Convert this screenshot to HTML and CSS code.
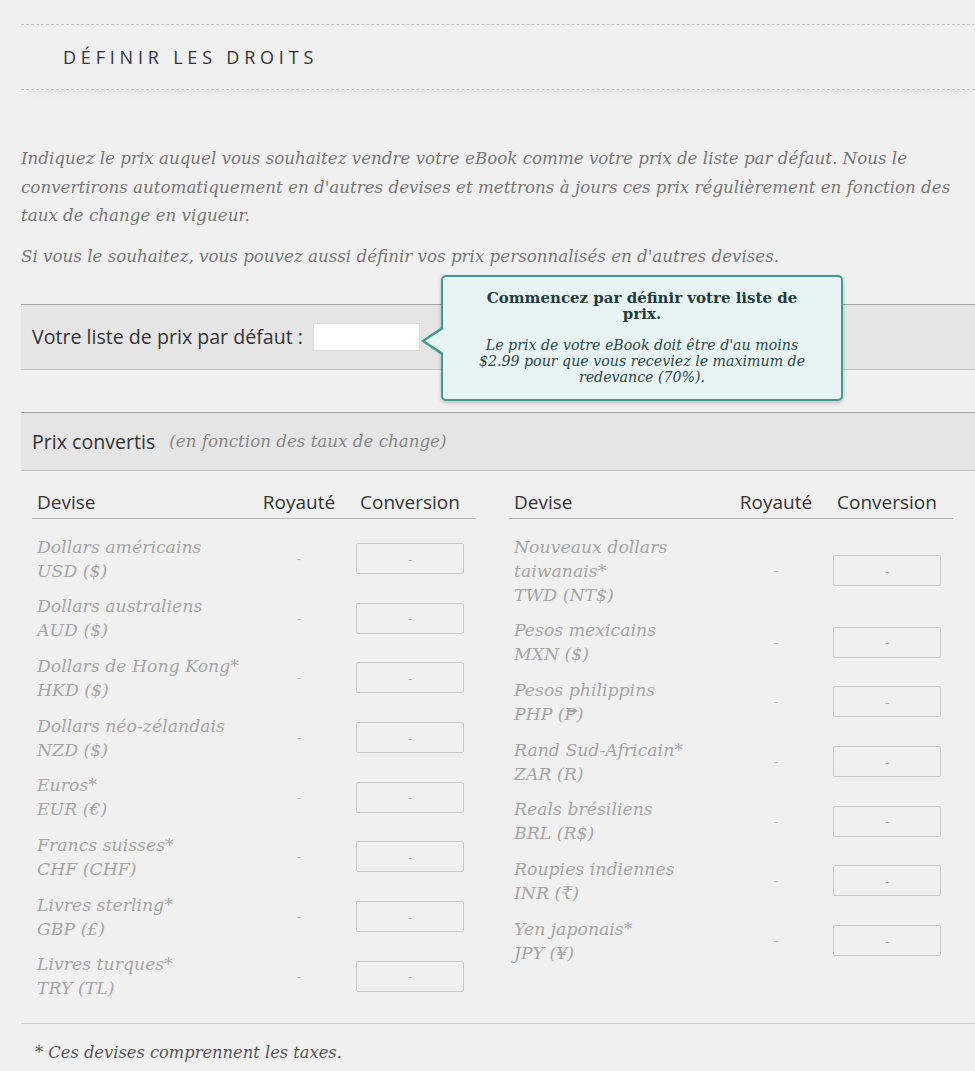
FILE: index.html
```html
<!DOCTYPE html>
<html lang="fr">
<head>
<meta charset="utf-8">
<title>Définir les droits</title>
<link rel="stylesheet" href="styles.css">
</head>
<body>
<div class="page">
  <div class="head"><h1 class="head-title">DÉFINIR LES DROITS</h1></div>

  <div class="intro">
    <p class="intro-p">Indiquez le prix auquel vous souhaitez vendre votre eBook comme votre prix de liste par défaut. Nous le<br>convertirons automatiquement en d'autres devises et mettrons à jours ces prix régulièrement en fonction des<br>taux de change en vigueur.</p>
    <p class="intro-p">Si vous le souhaitez, vous pouvez aussi définir vos prix personnalisés en d'autres devises.</p>
  </div>

  <div class="band price-band">
    <label class="band-label" for="listprice">Votre liste de prix par défaut :</label>
    <input class="price-input" id="listprice" type="text">
    <div class="tip">
      <div class="tip-title">Commencez par définir votre liste de<br>prix.</div>
      <div class="tip-text">Le prix de votre eBook doit être d'au moins<br>$2.99 pour que vous receviez le maximum de<br>redevance (70%).</div>
    </div>
  </div>

  <div class="band conv-band">
    <span class="band-label">Prix convertis</span>
    <span class="band-note">(en fonction des taux de change)</span>
  </div>

  <div class="tables">
    <div class="cur-table">
      <div class="row head-row"><span>Devise</span><span class="c">Royauté</span><span class="c">Conversion</span></div>
      <div class="body">
        <div class="row"><div class="dev">Dollars américains<br>USD ($)</div><div class="roy">-</div><div class="conv"><span class="box">-</span></div></div>
        <div class="row"><div class="dev">Dollars australiens<br>AUD ($)</div><div class="roy">-</div><div class="conv"><span class="box">-</span></div></div>
        <div class="row"><div class="dev">Dollars de Hong Kong*<br>HKD ($)</div><div class="roy">-</div><div class="conv"><span class="box">-</span></div></div>
        <div class="row"><div class="dev">Dollars néo-zélandais<br>NZD ($)</div><div class="roy">-</div><div class="conv"><span class="box">-</span></div></div>
        <div class="row"><div class="dev">Euros*<br>EUR (€)</div><div class="roy">-</div><div class="conv"><span class="box">-</span></div></div>
        <div class="row"><div class="dev">Francs suisses*<br>CHF (CHF)</div><div class="roy">-</div><div class="conv"><span class="box">-</span></div></div>
        <div class="row"><div class="dev">Livres sterling*<br>GBP (£)</div><div class="roy">-</div><div class="conv"><span class="box">-</span></div></div>
        <div class="row"><div class="dev">Livres turques*<br>TRY (TL)</div><div class="roy">-</div><div class="conv"><span class="box">-</span></div></div>
      </div>
    </div>
    <div class="cur-table">
      <div class="row head-row"><span>Devise</span><span class="c">Royauté</span><span class="c">Conversion</span></div>
      <div class="body">
        <div class="row"><div class="dev">Nouveaux dollars<br>taiwanais*<br>TWD (NT$)</div><div class="roy">-</div><div class="conv"><span class="box">-</span></div></div>
        <div class="row"><div class="dev">Pesos mexicains<br>MXN ($)</div><div class="roy">-</div><div class="conv"><span class="box">-</span></div></div>
        <div class="row"><div class="dev">Pesos philippins<br>PHP (₱)</div><div class="roy">-</div><div class="conv"><span class="box">-</span></div></div>
        <div class="row"><div class="dev">Rand Sud-Africain*<br>ZAR (R)</div><div class="roy">-</div><div class="conv"><span class="box">-</span></div></div>
        <div class="row"><div class="dev">Reals brésiliens<br>BRL (R$)</div><div class="roy">-</div><div class="conv"><span class="box">-</span></div></div>
        <div class="row"><div class="dev">Roupies indiennes<br>INR (₹)</div><div class="roy">-</div><div class="conv"><span class="box">-</span></div></div>
        <div class="row"><div class="dev">Yen japonais*<br>JPY (¥)</div><div class="roy">-</div><div class="conv"><span class="box">-</span></div></div>
      </div>
    </div>
  </div>

  <div class="foot">
    <p class="foot-note">* Ces devises comprennent les taxes.</p>
  </div>
</div>
</body>
</html>
```
FILE: styles.css
```css
html, body {
  margin: 0;
  padding: 0;
  background: #f0f0f0;
}
body {
  font-family: "Open Sans", "Noto Sans", sans-serif;
  color: #333;
}
.page {
  padding-left: 21px;
  overflow: hidden;
}
.head {
  margin-top: 24px;
  height: 64px;
  border-top: 1px dashed #c4c4c4;
  border-bottom: 1px dashed #c4c4c4;
  box-shadow: 0 7px 8px -6px rgba(0, 0, 0, 0.08);
}
.head-title {
  margin: 0;
  padding-left: 42px;
  line-height: 64px;
  font-size: 18px;
  font-weight: 400;
  letter-spacing: 4.8px;
  color: #333;
}
.intro {
  margin-top: 54px;
}
.intro-p {
  margin: 0 0 12.5px;
  font-family: "DejaVu Serif", "Liberation Serif", serif;
  font-style: italic;
  font-size: 16.7px;
  line-height: 28.5px;
  color: #777;
  white-space: nowrap;
}
.band {
  display: flex;
  align-items: center;
  padding-left: 11px;
  background: #e5e5e5;
  border-top: 1px solid #a3a3a3;
  border-bottom: 1px solid #c2c2c2;
}
.price-band {
  position: relative;
  margin-top: 33px;
  height: 64px;
}
.band-label {
  font-size: 19.6px;
  color: #333;
}
.price-input {
  margin-left: 10px;
  width: 105px;
  height: 26px;
  border: 1px solid #dcdcdc;
  background: #fff;
  padding: 0;
  font: inherit;
}
.tip {
  position: absolute;
  left: 420px;
  top: -30px;
  width: 398px;
  height: 122px;
  box-sizing: content-box;
  border: 2px solid #3d9b91;
  border-radius: 5px;
  background: #e8f4f4;
  box-shadow: 0 2px 4px rgba(0, 0, 0, 0.2);
  text-align: center;
  font-family: "DejaVu Serif", "Liberation Serif", serif;
}
.tip::before {
  content: "";
  position: absolute;
  left: -22px;
  top: 49px;
  border-top: 15px solid transparent;
  border-bottom: 15px solid transparent;
  border-right: 22px solid #3d9b91;
}
.tip::after {
  content: "";
  position: absolute;
  left: -18px;
  top: 51px;
  border-top: 13px solid transparent;
  border-bottom: 13px solid transparent;
  border-right: 20px solid #e8f4f4;
}
.tip-title {
  margin-top: 13px;
  font-size: 15px;
  font-weight: 700;
  line-height: 16px;
  color: #1f3d3d;
}
.tip-text {
  margin-top: 15px;
  font-size: 14.2px;
  font-style: italic;
  line-height: 16px;
  color: #2b4747;
}
.conv-band {
  margin-top: 42px;
  height: 57px;
}
.band-note {
  margin-left: 14px;
  font-family: "DejaVu Serif", "Liberation Serif", serif;
  font-style: italic;
  font-size: 16.7px;
  color: #888;
}
.tables {
  display: grid;
  grid-template-columns: 444px 444px;
  column-gap: 33px;
  padding-left: 11px;
  margin-top: 15px;
}
.row {
  display: grid;
  grid-template-columns: 218px 98px 124px;
  align-items: center;
}
.head-row {
  height: 32px;
  border-bottom: 1px solid #b5b5b5;
  font-size: 19px;
  color: #333;
}
.head-row span:first-child {
  padding-left: 5px;
}
.c {
  text-align: center;
}
.body {
  padding-top: 10px;
}
.body .row {
  padding: 6px 0 5.7px;
}
.dev {
  padding-left: 5px;
  font-family: "DejaVu Serif", "Liberation Serif", serif;
  font-style: italic;
  font-size: 17.3px;
  line-height: 24px;
  color: #a6a6a6;
}
.roy {
  text-align: center;
  color: #bbb;
  font-size: 14px;
}
.conv {
  display: flex;
  justify-content: center;
}
.box {
  width: 106px;
  height: 29px;
  border: 1px solid #c9c9c9;
  border-radius: 2px;
  display: flex;
  align-items: center;
  justify-content: center;
  color: #aaa;
  font-size: 13px;
}
.foot {
  margin-top: 17px;
  border-top: 1px solid #cfcfcf;
}
.foot-note {
  margin: 0;
  padding: 19px 0 0 14px;
  font-family: "DejaVu Serif", "Liberation Serif", serif;
  font-style: italic;
  font-size: 16.3px;
  color: #555;
}
```
